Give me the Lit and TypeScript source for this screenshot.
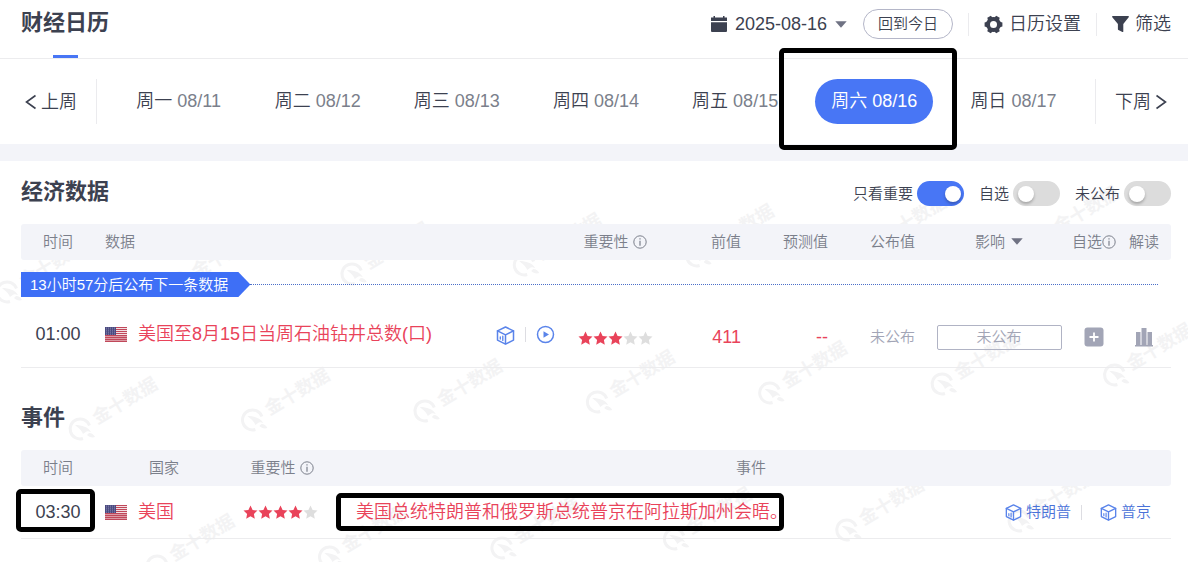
import { LitElement, html, css, svg, nothing } from "lit";
import { customElement, property, state } from "lit/decorators.js";
import { classMap } from "lit/directives/class-map.js";

const starPath = "M7.5 .6l2.1 4.4 4.9.6-3.6 3.3.9 4.8-4.3-2.4-4.3 2.4.9-4.8L.5 5.6l4.9-.6z";

@customElement("star-rating")
export class StarRating extends LitElement {
  @property({ type: Number }) value = 0;

  static styles = css`
    :host { display: inline-flex; vertical-align: middle; }
    .star { width: 15px; height: 15px; fill: #dedede; }
    .on { fill: #e9435a; }
  `;

  render() {
    return [1, 2, 3, 4, 5].map(
      (n) => html`<svg class=${classMap({ star: true, on: n <= this.value })} viewBox="0 0 15 15" aria-hidden="true"><path d=${starPath}></path></svg>`
    );
  }
}

@customElement("us-flag")
export class UsFlag extends LitElement {
  static styles = css`
    :host { display: inline-flex; vertical-align: middle; }
    .flag { width: 22px; height: 15px; }
  `;

  render() {
    return html`<svg class="flag" viewBox="0 0 22 15" aria-label="美国国旗">
      <rect width="22" height="15" fill="#f2dfe2"></rect>
      ${[0, 2, 4, 6, 8, 10, 12, 14].map((y) => svg`<rect y=${y} width="22" height="1" fill="#c0485a"></rect>`)}
      ${[9, 11, 13].map((y) => svg`<rect y=${y} width="22" height="1" fill="#dc9aa4"></rect>`)}
      <rect width="11" height="8" fill="#4a4a80"></rect>
      ${[1, 3, 5, 7].map((y) => [1, 3, 5, 7, 9].map((x) => svg`<rect x=${x} y=${y - 0.3} width="1" height=".8" fill="#9c9cc0"></rect>`))}
    </svg>`;
  }
}

@customElement("cube-icon")
export class CubeIcon extends LitElement {
  static styles = css`
    :host { display: inline-flex; vertical-align: middle; width: 19px; height: 19px; }
    .cube { width: 100%; height: 100%; fill: none; stroke: #5a84ea; stroke-width: 1.5; stroke-linejoin: round; stroke-linecap: round; }
  `;

  render() {
    return html`<svg class="cube" viewBox="0 0 19 19" aria-hidden="true">
      <path d="M9.5 1l8 3.9v9.2l-8 4-8-4V4.900z"></path>
      <path d="M1.500 4.900l8 3.900 8-3.900M9.500 8.800v9"></path>
      <path d="M4.300 10.800v2.300M6.800 10.200v4.200" stroke-width="1.300"></path>
    </svg>`;
  }
}

const infoIcon = html`<svg class="info" viewBox="0 0 14 14" aria-hidden="true">
  <circle cx="7" cy="7" r="6.2" fill="none" stroke="currentColor"></circle>
  <path d="M7 3.200v1.400M7 5.800v5" stroke="currentColor" stroke-width="1.200"></path>
</svg>`;

const caret = html`<svg class="caret" viewBox="0 0 12 7" aria-hidden="true"><path d="M.3.3h11.400L6 6.800z" fill="currentColor"></path></svg>`;

const gearTeeth = [0, 60, 120, 180, 240, 300];

/* Watermark rows: start of each row, then a fixed step to the right and up. */
const markStep = 172.4;
const markRows = [
  { x: 7, y: 131 },
  { x: 80, y: 268 },
  { x: 157, y: 405 },
];

const days = [
  ["周一", "08/11"],
  ["周二", "08/12"],
  ["周三", "08/13"],
  ["周四", "08/14"],
  ["周五", "08/15"],
  ["周六", "08/16"],
  ["周日", "08/17"],
];

@customElement("app-root")
export class AppRoot extends LitElement {
  @state() private selected = "08/16";

  private onResize = () => this.requestUpdate();

  connectedCallback() {
    super.connectedCallback();
    window.addEventListener("resize", this.onResize);
  }

  disconnectedCallback() {
    window.removeEventListener("resize", this.onResize);
    super.disconnectedCallback();
  }

  static styles = css`
    :host {
      display: flex;
      flex-direction: column;
      min-height: 100vh;
      background: #fff;
      color: #3c4150;
      font: 350 18px/24px "Liberation Sans", "Noto Sans CJK SC", sans-serif;
      overflow: hidden;
    }
    * { box-sizing: border-box; }
    button { font: inherit; color: inherit; background: none; border: 0; padding: 0; cursor: pointer; white-space: nowrap; }
    a { color: inherit; text-decoration: none; }
    h1, h2 { margin: 0; font-size: 22px; line-height: 30px; font-weight: 700; }
    svg { flex: none; }
    .masthead { display: flex; justify-content: space-between; border-bottom: 1px solid #ececee; padding: 0 17px 0 21px; height: 59px; }
    .brand { display: flex; flex-direction: column; justify-content: space-between; padding-top: 8px; }
    .brand::after { content: ""; width: 25px; height: 3px; background: #4876f5; align-self: center; }
    .toolbar { display: flex; align-items: center; padding-bottom: 10px; }
    .tool { display: flex; align-items: center; gap: 6px; }
    .date { gap: 8px; }
    .caret { width: 12px; height: 7px; color: #6f7283; }
    .today { width: 90px; height: 30px; margin-left: 16px; border: 1px solid #b4b6c8; border-radius: 15px; font-size: 15px; line-height: 20px; }
    .rule { width: 1px; height: 23px; background: #ebebee; margin: 0 15px; }
    .week { display: flex; align-items: center; padding: 20px 21px 20px 25px; height: 85px; }
    .nav { display: flex; align-items: center; gap: 4px; }
    .prev { width: 72px; height: 45px; border-right: 1px solid #ebebee; }
    .next { width: 72px; height: 45px; border-left: 1px solid #ebebee; justify-content: flex-end; }
    .chevron { width: 12px; height: 16px; fill: none; stroke: #3c4150; stroke-width: 1.600; }
    .days { flex: 1; display: grid; grid-template-columns: repeat(7, 1fr); justify-items: center; padding: 0 12px; }
    .day { position: relative; height: 45px; padding: 0 16px 2px; border-radius: 23px; }
    .day .num { color: #7b7f8b; }
    .day.active { background: #4876f5; color: #fff; }
    .day.active .num { color: #fff; }
    .outline { position: absolute; border: 5px solid #000; border-radius: 5px; pointer-events: none; z-index: 2; }
    .around-day { inset: -31px -24px -26px -36px; }
    .band { height: 17px; background: #f3f4f9; }
    .board { position: relative; flex: 1; padding: 0 17px 0 21px; }
    .watermark { position: absolute; inset: 0; width: 100%; height: 100%; font-size: 18px; font-weight: 700; fill: #f3f3f4; }
    .ring { fill: none; stroke: #f3f3f4; stroke-width: 3; }
    .panel { position: relative; }
    .title-row { display: flex; align-items: center; justify-content: space-between; height: 63px; padding-bottom: 2px; }
    .event-title { height: 82px; padding-top: 19px; }
    .filters { display: flex; gap: 15px; padding-top: 4px; font-size: 15px; line-height: 24px; }
    .filter { display: flex; align-items: center; gap: 4px; }
    .switch { appearance: none; margin: 0; width: 47px; height: 25px; border-radius: 13px; background: #dcdcdc; display: flex; align-items: center; padding: 0 5px; cursor: pointer; }
    .switch::before { content: ""; width: 16px; height: 16px; border-radius: 8px; background: #fff; box-shadow: 0 2px 3px rgba(0, 0, 0, 0.25); }
    .switch:checked { background: #4876f5; justify-content: flex-end; padding: 0 3px; }
    table { width: 100%; table-layout: fixed; border-collapse: separate; border-spacing: 0; }
    th, td { padding: 0; text-align: center; white-space: nowrap; font-weight: 350; }
    th { height: 36px; background: #f3f4f9; color: #7b7f8b; font-size: 15px; line-height: 20px; }
    th:first-child { border-radius: 3px 0 0 3px; }
    th:last-child { border-radius: 0 3px 3px 0; }
    .info { width: 14px; height: 14px; vertical-align: -2px; }
    th .caret { margin-left: 2px; vertical-align: 2px; }
    .spaced .info { margin-left: 4px; }
    .c-time { width: 74px; }
    .c-links { width: 90px; }
    .c-stars { width: 92px; }
    .c-prev { width: 80px; }
    .c-fore { width: 87px; }
    .c-real { width: 99px; }
    .c-impact { width: 144px; }
    .c-fav { width: 46px; }
    .c-read { width: 54px; }
    .c-country { width: 138px; }
    .c-rank { width: 98px; }
    .left { text-align: left; padding-left: 10px; }
    .right { text-align: right; }
    .end { text-align: right; padding-right: 12px; }
    .next-up { padding-top: 12px; }
    .strip { display: flex; align-items: center; padding-right: 13px; }
    .strip::after { content: ""; flex: 1; border-top: 1px dotted #4b6fc9; }
    .ribbon { height: 25px; padding: 0 22px 0 9px; background: #3e6ff6; color: #fff; font-size: 15px; line-height: 25px; clip-path: polygon(0 0, calc(100% - 12px) 0, 100% 50%, calc(100% - 12px) 100%, 0 100%); }
    .data td { height: 71px; padding-top: 4px; border-bottom: 1px solid #ececee; }
    .data .low { padding-top: 10px; }
    .red { color: #e9435a; }
    .muted { color: #a2a5b6; font-size: 15px; }
    .named { display: flex; align-items: center; gap: 11px; }
    .links { display: flex; align-items: center; justify-content: center; gap: 10px; padding-left: 3px; }
    .links .bar, .tags .bar { width: 1px; height: 15px; background: #dddde2; }
    .play { width: 19px; height: 19px; display: block; }
    .impact { width: 125px; height: 25px; border: 1px solid #b0b3c4; border-radius: 2px; color: #a2a5b6; font-size: 15px; line-height: 22px; display: block; margin: 0 auto; }
    .square { width: 20px; height: 20px; display: block; margin: 0 auto; }
    .events td { height: 53px; border-bottom: 1px solid #ececee; }
    .events td.time { position: relative; }
    .around-time { inset: 3px 0 6px -5px; }
    .around-event { inset: -9px 4px -9px -20px; }
    .rank { padding-right: 3px; padding-bottom: 2px; }
    .happening { display: flex; justify-content: space-between; align-items: center; padding: 0 20px 0 25px; }
    .headline { position: relative; line-height: 20px; }
    .tags { display: flex; align-items: center; gap: 10px; font-size: 15px; color: #4a72d8; }
    .tag { display: flex; align-items: center; gap: 4px; }
    .tag cube-icon { width: 17px; height: 17px; }
    .tags .bar { margin-right: 8px; }
  `;

  private renderWatermark() {
    const width = window.innerWidth;
    const marks = markRows.flatMap((r) =>
      Array.from({ length: Math.ceil((width - r.x) / markStep) }, (_, i) => ({ x: r.x + i * markStep, y: r.y - i * 9 }))
    );
    return html`<svg class="watermark" aria-hidden="true">
      ${marks.map(
        (m) => svg`<g transform="translate(${m.x} ${m.y})">
          <path class="ring" d="M9.500 -3.500A10 10 0 1 0 3 9.500"></path>
          <path d="M-5 -4C2 -4 8 -2 11 3C6 1 6 3 3 5C1 0 -2 -1 -5 -4z"></path>
          <path d="M9 4c3 0 5 2 6 4-3 1-6 0-8-2z"></path>
          <text transform="rotate(-31)" x="17" y="5">金十数据</text>
        </g>`
      )}
    </svg>`;
  }

  render() {
    return html`
      <header class="masthead">
        <div class="brand"><h1>财经日历</h1></div>
        <div class="toolbar">
          <button class="tool date">
            <svg width="16" height="16" viewBox="0 0 16 16" fill="#3c4150"><path d="M0 1.500h2.500V0H4v1.500h8V0h1.500v1.500H16V5H0zM0 6.300h16V15a1 1 0 0 1-1 1H1a1 1 0 0 1-1-1z"></path></svg>
            <span>2025-08-16</span>
            ${caret}
          </button>
          <button class="today">回到今日</button>
          <span class="rule"></span>
          <button class="tool">
            <svg width="19" height="19" viewBox="-9.500 -9.500 19 19" fill="#3c4150">
              ${gearTeeth.map((a) => svg`<path transform="rotate(${a + 30})" d="M-2.900-5.500L-2-8.900H2L2.900-5.500z"></path>`)}
              <circle r="5.500" fill="none" stroke="#3c4150" stroke-width="4"></circle>
            </svg>
            <span>日历设置</span>
          </button>
          <span class="rule"></span>
          <button class="tool">
            <svg width="17" height="16" viewBox="0 0 17 16" fill="#3c4150"><path d="M.8 0h15.400c.7 0 1 .8.500 1.300L11.300 8v7.400c0 .5-.5.700-.9.500l-4-1.900c-.3-.1-.5-.4-.5-.8V8L.3 1.300C-.2.8.1 0 .8 0z"></path></svg>
            <span>筛选</span>
          </button>
        </div>
      </header>

      <nav class="week">
        <button class="nav prev"><svg class="chevron" viewBox="0 0 12 16"><path d="M10.500 1.500L1.500 8l9 6.500"></path></svg>上周</button>
        <div class="days">
          ${days.map(
            ([name, date]) => html`<button
              class=${classMap({ day: true, active: date === this.selected })}
              @click=${() => (this.selected = date)}
            >${name} <span class="num">${date}</span>${date === "08/16" ? html`<span class="outline around-day"></span>` : nothing}</button>`
          )}
        </div>
        <button class="nav next">下周<svg class="chevron" viewBox="0 0 12 16"><path d="M1.500 1.500l9 6.500-9 6.500"></path></svg></button>
      </nav>
      <div class="band"></div>

      <main class="board">
        ${this.renderWatermark()}
        <section class="panel">
          <div class="title-row">
            <h2>经济数据</h2>
            <div class="filters">
              <label class="filter">只看重要<input class="switch" type="checkbox" role="switch" checked /></label>
              <label class="filter">自选<input class="switch" type="checkbox" role="switch" /></label>
              <label class="filter">未公布<input class="switch" type="checkbox" role="switch" /></label>
            </div>
          </div>
          <table>
            <colgroup>
              <col class="c-time" /><col /><col class="c-links" /><col class="c-stars" /><col class="c-prev" /><col class="c-fore" /><col class="c-real" /><col class="c-impact" /><col class="c-fav" /><col class="c-read" />
            </colgroup>
            <thead>
              <tr>
                <th>时间</th>
                <th class="left" colspan="2">数据</th>
                <th>重要性 ${infoIcon}</th>
                <th class="right">前值</th>
                <th class="right">预测值</th>
                <th class="end">公布值</th>
                <th>影响 ${caret}</th>
                <th>自选${infoIcon}</th>
                <th>解读</th>
              </tr>
            </thead>
            <tbody>
              <tr>
                <td class="next-up" colspan="10"><div class="strip"><span class="ribbon">13小时57分后公布下一条数据</span></div></td>
              </tr>
              <tr class="data">
                <td>01:00</td>
                <td class="left"><div class="named"><us-flag></us-flag><a class="red" href="#data">美国至8月15日当周石油钻井总数(口)</a></div></td>
                <td>
                  <div class="links">
                    <a href="#cube" aria-label="数据"><cube-icon></cube-icon></a>
                    <span class="bar"></span>
                    <a href="#play" aria-label="播放"><svg class="play" viewBox="0 0 19 19"><circle cx="9.500" cy="9.500" r="8" fill="none" stroke="#5a84ea" stroke-width="1.500"></circle><path d="M7.500 6.300l5.500 3.200-5.500 3.200z" fill="#5a84ea"></path></svg></a>
                  </div>
                </td>
                <td class="low"><star-rating .value=${3}></star-rating></td>
                <td class="low right red">411</td>
                <td class="low right red">--</td>
                <td class="low end muted">未公布</td>
                <td class="low"><button class="impact">未公布</button></td>
                <td class="low"><button class="square" aria-label="添加自选"><svg width="20" height="20" viewBox="0 0 20 20"><rect x=".5" y=".5" width="19" height="19" rx="3" fill="#a2a5b6"></rect><path d="M10 5.500v9M5.500 10h9" stroke="#fff" stroke-width="1.800"></path></svg></button></td>
                <td class="low"><button class="square" aria-label="解读"><svg width="20" height="20" viewBox="0 0 20 20" fill="#a2a5b6"><path d="M1 18h18v1.500H1zM2 5h4.500v14H2zM7.500 1h5v18h-5zM13.500 5h4.500v14h-4.500z"></path></svg></button></td>
              </tr>
            </tbody>
          </table>
        </section>

        <section class="panel">
          <div class="title-row event-title"><h2>事件</h2></div>
          <table class="events">
            <colgroup><col class="c-time" /><col class="c-country" /><col class="c-rank" /><col /></colgroup>
            <thead>
              <tr><th>时间</th><th>国家</th><th class="spaced">重要性${infoIcon}</th><th>事件</th></tr>
            </thead>
            <tbody>
              <tr>
                <td class="time">03:30<span class="outline around-time"></span></td>
                <td class="left"><div class="named red"><us-flag></us-flag>美国</div></td>
                <td class="rank"><star-rating .value=${4}></star-rating></td>
                <td>
                  <div class="happening">
                    <span class="headline red">美国总统特朗普和俄罗斯总统普京在阿拉斯加州会晤。<span class="outline around-event"></span></span>
                    <div class="tags">
                      <a class="tag" href="#trump"><cube-icon></cube-icon>特朗普</a>
                      <span class="bar"></span>
                      <a class="tag" href="#putin"><cube-icon></cube-icon>普京</a>
                    </div>
                  </div>
                </td>
              </tr>
            </tbody>
          </table>
        </section>
      </main>
    `;
  }
}
